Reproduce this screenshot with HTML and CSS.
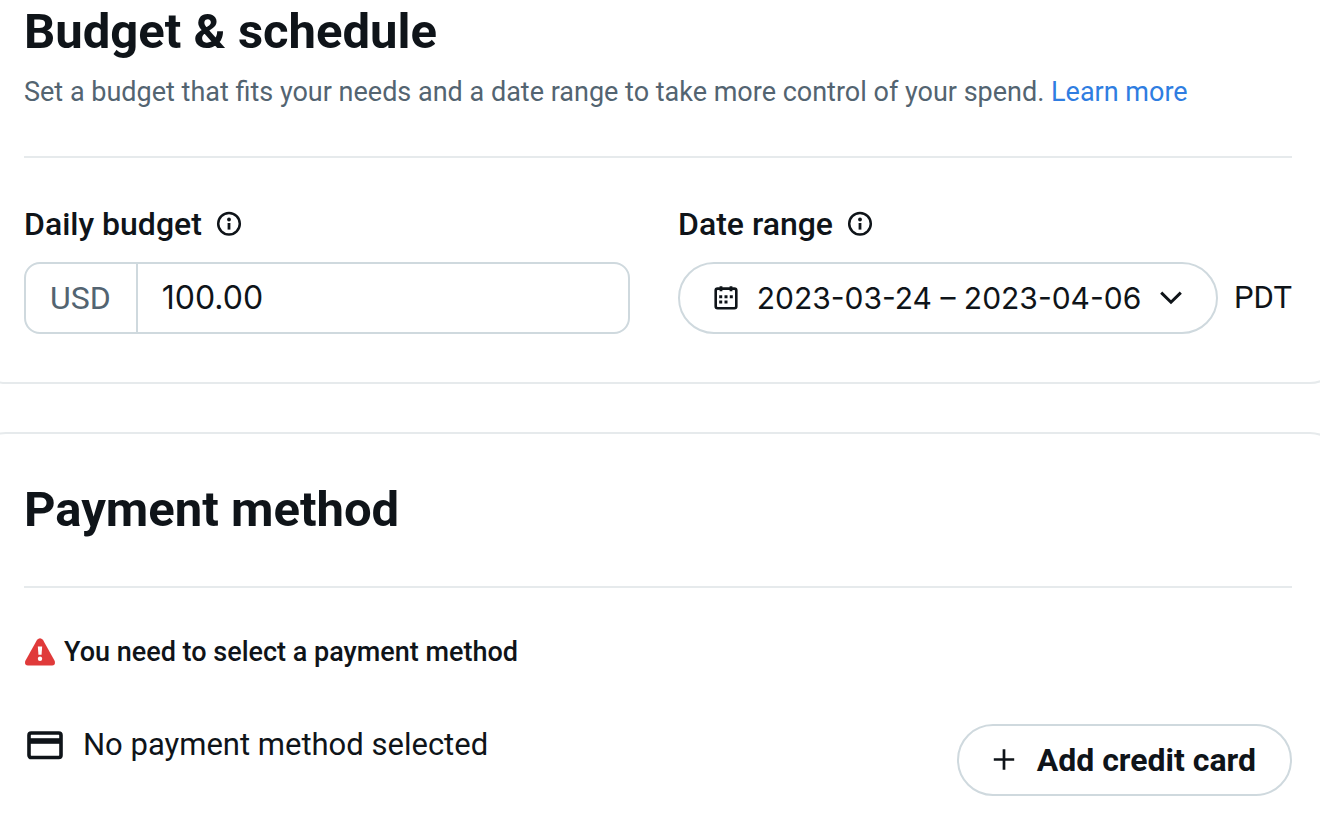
FILE: index.html
```html
<!DOCTYPE html>
<html lang="en">
<head>
<meta charset="utf-8">
<title>Budget &amp; schedule</title>
<link rel="stylesheet" href="styles.css">
</head>
<body>
<main class="page">
  <section class="card card-budget">
    <header class="card-header">
      <h1 class="title">Budget &amp; schedule</h1>
      <p class="subtitle">Set a budget that fits your needs and a date range to take more control of your spend. <a class="link" href="#">Learn more</a></p>
    </header>
    <div class="fields">
      <div class="field">
        <div class="label-row">
          <label class="label" for="budget">Daily budget</label>
          <svg class="info" viewBox="0 0 26 26" aria-hidden="true"><circle cx="13" cy="12.7" r="10.8" fill="none" stroke="currentColor" stroke-width="2.5"/><circle cx="13" cy="8.5" r="1.9" fill="currentColor"/><path d="M13 12v6.6" stroke="currentColor" stroke-width="2.8"/></svg>
        </div>
        <div class="money">
          <span class="currency">USD</span>
          <input class="amount" id="budget" type="text" value="100.00">
        </div>
      </div>
      <div class="field">
        <div class="label-row">
          <label class="label" for="range">Date range</label>
          <svg class="info" viewBox="0 0 26 26" aria-hidden="true"><circle cx="13" cy="12.7" r="10.8" fill="none" stroke="currentColor" stroke-width="2.5"/><circle cx="13" cy="8.5" r="1.9" fill="currentColor"/><path d="M13 12v6.6" stroke="currentColor" stroke-width="2.8"/></svg>
        </div>
        <div class="range-row">
          <button class="pill range" id="range" type="button">
            <svg class="calendar" viewBox="0 0 24 24" aria-hidden="true"><rect x="1.7" y="2.6" width="20.6" height="19.6" rx="2" fill="none" stroke="currentColor" stroke-width="2.6"/><path d="M7 .3v5M17 .3v5" stroke="currentColor" stroke-width="2.8"/><path d="M10.5 9.3h3v3h-3zM15.8 9.3h3v3h-3zM5.2 9.3h3v3h-3zM5.2 14.6h3v3h-3zM10.5 14.6h3v3h-3z" fill="currentColor"/></svg>
            <span class="range-text">2023-03-24 – 2023-04-06</span>
            <svg class="chevron" viewBox="0 0 22 14" aria-hidden="true"><path d="M1.2 1.6 11 11.2 20.8 1.6" fill="none" stroke="currentColor" stroke-width="3" stroke-linejoin="miter"/></svg>
          </button>
          <span class="zone">PDT</span>
        </div>
      </div>
    </div>
  </section>

  <section class="card card-payment">
    <header class="card-header">
      <h2 class="title">Payment method</h2>
    </header>
    <p class="alert">
      <svg class="warning" viewBox="0 0 30 27" aria-hidden="true"><path d="M12.2 1.7Q15-1.3 17.8 1.7L29.2 22.2Q30.2 26.3 26.7 26.5H3.3Q-.2 26.3.8 22.2Z" fill="#e03a3a"/><path d="M12.9 8.2h4.2l-.6 8h-3z" fill="#fff"/><circle cx="15" cy="20" r="2.1" fill="#fff"/></svg>
      <span>You need to select a payment method</span>
    </p>
    <div class="method-row">
      <p class="method">
        <svg class="credit" viewBox="0 0 36 30" aria-hidden="true"><rect x="2" y="3" width="32" height="24.5" rx="2.2" fill="none" stroke="currentColor" stroke-width="3.6"/><path d="M2 11h32" stroke="currentColor" stroke-width="5.6"/></svg>
        <span>No payment method selected</span>
      </p>
      <button class="pill add" type="button">
        <svg class="plus" viewBox="0 0 22 22" aria-hidden="true"><path d="M11 .3v20.4M.8 10.5h20.4" stroke="currentColor" stroke-width="2.7"/></svg>
        <span>Add credit card</span>
      </button>
    </div>
  </section>
</main>
</body>
</html>
```
FILE: styles.css
```css
* {
  box-sizing: border-box;
}

body {
  margin: 0;
  background: #fff;
  color: #0f1419;
  font-family: Roboto, "Liberation Sans", sans-serif;
  font-size: 32px;
  line-height: 40px;
  overflow-x: hidden;
}

h1,
h2,
p {
  margin: 0;
}

svg {
  flex: none;
}

.page {
  display: flex;
  flex-direction: column;
  gap: 48px;
  overflow: hidden;
}

.card {
  margin: 0 -22px 0 -26px;
  padding: 48px;
  border: 2px solid #e6eaec;
  border-radius: 32px;
}

.card-budget {
  padding-top: 0;
  border-top: 0;
  border-top-left-radius: 0;
  border-top-right-radius: 0;
}

.card-payment {
  padding-bottom: 30px;
  border-bottom: 0;
  border-bottom-left-radius: 0;
  border-bottom-right-radius: 0;
}

.card-header {
  padding-bottom: 48px;
  border-bottom: 2px solid #e6eaec;
}

.card-budget .card-header {
  padding-bottom: 46px;
}

.title {
  font-size: 49px;
  line-height: 56px;
  font-weight: 700;
}

.card-budget .title {
  padding-top: 4px;
}

.subtitle {
  padding-top: 14px;
  color: #536471;
  font-size: 27px;
  line-height: 36px;
}

.link {
  color: #2f7de1;
  text-decoration: none;
}

.fields {
  display: grid;
  grid-template-columns: 606fr 614fr;
  gap: 48px;
  padding-top: 46px;
}

.field {
  min-width: 0;
}

.label-row {
  display: flex;
  align-items: center;
  gap: 14px;
  padding-bottom: 18px;
}

.label {
  font-weight: 500;
}

.info {
  width: 26px;
  height: 26px;
}

.money {
  display: flex;
  height: 72px;
  border: 2px solid #cfd9de;
  border-radius: 16px;
}

.currency {
  display: flex;
  align-items: center;
  padding: 0 25px 0 24px;
  border-right: 2px solid #cfd9de;
  color: #536471;
}

.amount {
  flex: 1;
  min-width: 0;
  padding: 0 24px;
  border: 0;
  background: none;
  color: inherit;
  font: inherit;
  font-family: Inter, Roboto, sans-serif;
}

.range-row {
  display: flex;
  align-items: center;
  gap: 16px;
}

.pill {
  display: flex;
  align-items: center;
  height: 72px;
  padding: 0 34px;
  border: 2px solid #cfd9de;
  border-radius: 36px;
  background: #fff;
  color: inherit;
  font: inherit;
  white-space: nowrap;
}

.range {
  flex: 1;
  justify-content: space-between;
}

.calendar {
  width: 24px;
  height: 24px;
}

.range-text {
  font-family: Inter, Roboto, sans-serif;
  font-size: 30px;
}

.zone {
  font-size: 31px;
}

.chevron {
  width: 22px;
  height: 14px;
}

.alert {
  display: flex;
  align-items: center;
  gap: 8px;
  padding-top: 44px;
  font-size: 27px;
  font-weight: 500;
}

.warning {
  width: 32px;
  height: 28px;
}

.method-row {
  display: flex;
  justify-content: space-between;
  align-items: flex-start;
  padding-top: 52px;
}

.method {
  display: flex;
  align-items: center;
  gap: 20px;
  padding: 1px 0 0 3px;
  font-size: 31px;
}

.credit {
  width: 36px;
  height: 30px;
}

.add {
  gap: 22px;
  font-weight: 700;
}

.plus {
  width: 22px;
  height: 22px;
}
```
